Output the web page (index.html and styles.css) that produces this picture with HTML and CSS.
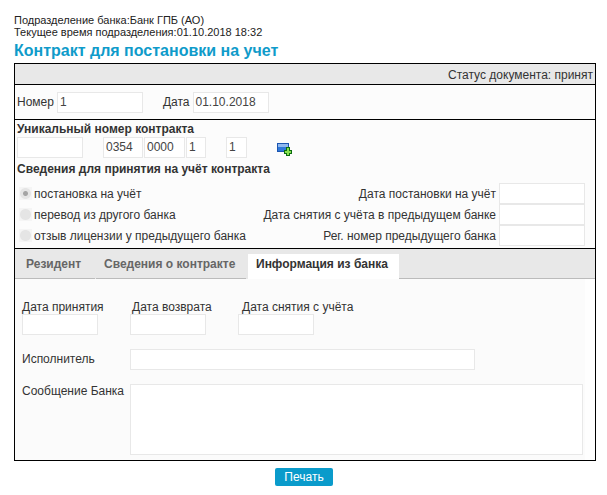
FILE: index.html
```html
<!DOCTYPE html>
<html lang="ru">
<head>
<meta charset="utf-8">
<title>Контракт для постановки на учет</title>
<link rel="stylesheet" href="styles.css">
</head>
<body>
<div class="page">
  <div class="info">Подразделение банка:Банк ГПБ (АО)</div>
  <div class="info">Текущее время подразделения:01.10.2018 18:32</div>
  <h1 class="title">Контракт для постановки на учет</h1>
  <div class="box">
    <div class="status">Статус документа: принят</div>
    <div class="numrow">
      <span class="lbl">Номер</span>
      <span class="field w86">1</span>
      <span class="lbl date-lbl">Дата</span>
      <span class="field w76">01.10.2018</span>
    </div>
    <div class="section">
      <div class="heading">Уникальный номер контракта</div>
      <div class="unique">
        <span class="field w66"></span>
        <span class="field w40 ml19">0354</span>
        <span class="field w41">0000</span>
        <span class="field w20">1</span>
        <span class="field w21 ml19">1</span>
        <svg class="add" width="16" height="13" viewBox="0 0 16 13" aria-hidden="true">
          <rect x="0" y="0" width="12" height="9" fill="#1c55b0"/>
          <rect x="1" y="1" width="10" height="3" fill="#8fb8ee"/>
          <rect x="1" y="4" width="10" height="4" fill="#2f78d8"/>
          <path d="M9 4h4v3h2v4h-2v2H9v-2H7V7h2z" fill="#0b6b10"/>
          <path d="M10 5h2v3h2v2h-2v2h-2v-2H8V8h2z" fill="#86e04e"/>
        </svg>
      </div>
      <div class="heading second">Сведения для принятия на учёт контракта</div>
      <div class="options">
        <div class="opt"><span class="radio checked"></span>постановка на учёт</div>
        <div class="rlabel">Дата постановки на учёт</div>
        <span class="field w86"></span>
        <div class="opt"><span class="radio"></span>перевод из другого банка</div>
        <div class="rlabel">Дата снятия с учёта в предыдущем банке</div>
        <span class="field w86"></span>
        <div class="opt"><span class="radio"></span>отзыв лицензии у предыдущего банка</div>
        <div class="rlabel">Рег. номер предыдущего банка</div>
        <span class="field w86"></span>
      </div>
    </div>
    <div class="tabs">
      <span class="tab t1">Резидент</span>
      <span class="tab t2">Сведения о контракте</span>
      <span class="tab active">Информация из банка</span>
    </div>
    <div class="content">
      <div class="dates">
        <div class="dcol"><div class="dlabel">Дата принятия</div><span class="field w76"></span></div>
        <div class="dcol"><div class="dlabel l2">Дата возврата</div><span class="field w76"></span></div>
        <div class="dcol"><div class="dlabel l3">Дата снятия с учёта</div><span class="field w76"></span></div>
      </div>
      <div class="formrow exec">
        <span class="flabel">Исполнитель</span>
        <span class="field w345"></span>
      </div>
      <div class="formrow msg">
        <span class="flabel top">Сообщение Банка</span>
        <span class="field area"></span>
      </div>
    </div>
  </div>
  <div class="actions"><button class="print" type="button">Печать</button></div>
</div>
</body>
</html>
```
FILE: styles.css
```css
* { box-sizing: border-box; }
html, body { margin: 0; padding: 0; background: #fff; }
body { font-family: "Liberation Sans", Arial, sans-serif; font-size: 12px; color: #333; }
.page { width: 596px; margin-left: 14px; padding-top: 14px; }
.info { height: 12px; line-height: 12px; font-size: 11px; color: #222; }
.title { margin: 3px 0 0; height: 22px; line-height: 20px; font-size: 16px; font-weight: bold; color: #0f9bca; }
.box { width: 582px; height: 398px; border: 1px solid #000; background: #fefefe; display: flex; flex-direction: column; }
.status { height: 20px; line-height: 22px; background: #e8e8e8; text-align: right; padding-right: 2px; }
.numrow { height: 36px; background: #fcfcfc; border-top: 1px solid #000; border-bottom: 1px solid #000; display: flex; align-items: center; padding-left: 2px; }
.lbl { margin-right: 3px; }
.date-lbl { margin-left: 20px; margin-right: 3px; }
.field { display: inline-block; height: 21px; line-height: 19px; border: 1px solid #e8e8e8; background: #fff; padding-left: 2px; color: #444; flex: none; }
.w86 { width: 86px; } .w76 { width: 76px; } .w66 { width: 66px; } .w40 { width: 40px; } .w41 { width: 41px; }
.w20 { width: 20px; } .w21 { width: 21px; } .w345 { width: 345px; }
.ml19 { margin-left: 19px; }
.section { height: 129px; background: #fcfcfc; padding: 2px 0 0 2px; border-bottom: 1px solid #000; }
.heading { height: 14px; line-height: 14px; font-weight: bold; color: #333; }
.unique { display: flex; align-items: flex-start; gap: 1px; height: 21px; margin-top: 1px; }
.add { margin-left: 29px; margin-top: 6px; }
.second { margin-top: 4px; }
.options { display: grid; grid-template-columns: 1fr auto 86px; grid-auto-rows: 21px; align-items: center; margin-top: 7px; width: 568px; column-gap: 3px; }
.opt { display: flex; align-items: center; gap: 2px; padding-left: 2px; }
.rlabel { text-align: right; }
.options .field { height: 21px; }
.radio { width: 13px; height: 13px; flex: none; background: radial-gradient(circle, #e5e5e5 0 5px, #f5f5f5 6px); }
.radio.checked { background: radial-gradient(circle, #a4a4a4 0 2px, #e5e5e5 3px 5px, #f5f5f5 6px); }
.tabs { height: 30px; background: #e8e8e8; border-bottom: 1px solid #bbb; display: flex; font-weight: bold; padding-top: 5px; }
.tab { height: 24px; line-height: 20px; color: #666; }
.t1 { width: 81px; height: 25px; padding-left: 11px; border-right: 1px solid #e8e8e8; }
.t2 { width: 152px; height: 25px; padding-left: 8px; border-right: 2px solid #e8e8e8; }
.active { width: 151px; background: #fff; color: #333; padding-left: 8px; height: 25px; }
.content { flex: 1; padding: 0 0 0 7px; width: 570px; background: #fbfbfb; }
.dates { display: flex; gap: 32px; padding-top: 20px; }
.dcol { width: 76px; }
.dcol .field { display: block; }
.dlabel { height: 15px; line-height: 17px; white-space: nowrap; }
.l2 { padding-left: 2px; }
.l3 { padding-left: 4px; }
.formrow { display: flex; }
.flabel { width: 108px; flex: none; line-height: 21px; }
.exec { margin-top: 14px; }
.msg { margin-top: 14px; }
.flabel.top { line-height: 14px; }
.area { width: 453px; height: 71px; }
.actions { width: 580px; display: flex; justify-content: center; padding-top: 7px; }
.print { width: 58px; height: 18px; padding: 0; border: 0; border-radius: 2px; background: #0a9bcb; color: #fff; font: 12px "Liberation Sans", Arial, sans-serif; }
```
